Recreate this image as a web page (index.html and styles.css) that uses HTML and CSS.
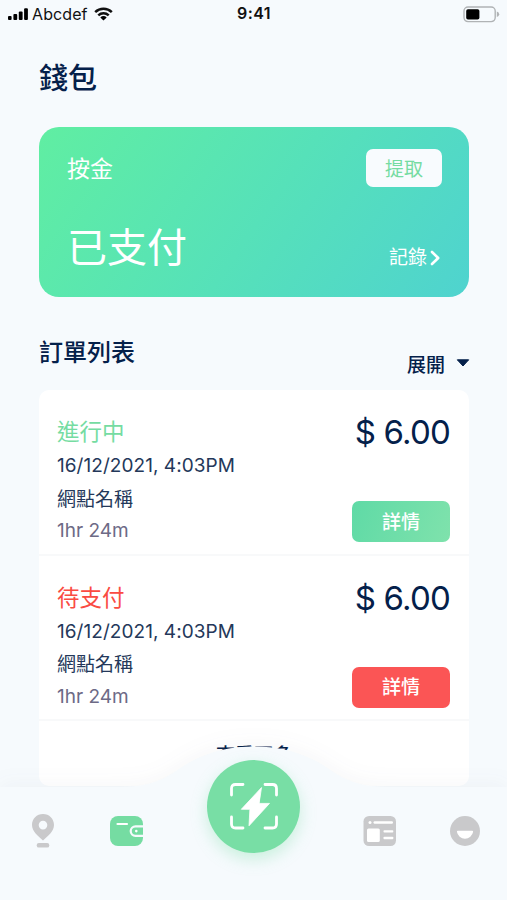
FILE: index.html
```
<!DOCTYPE html>
<html lang="zh-Hant">

<head>
    <meta charset="UTF-8">
    <title>錢包</title>
    <link rel="stylesheet" href="styles.css">
</head>

<body>
    <div class="screen">
        <div class="status">
            <div class="carrier">
                <svg width="21" height="14" viewBox="0 0 21 14">
                    <rect x="0" y="9" width="3.6" height="4" rx="1"/>
                    <rect x="5.4" y="7" width="3.8" height="6" rx="1"/>
                    <rect x="10.8" y="4.5" width="3.8" height="8.5" rx="1"/>
                    <rect x="16.1" y="1.2" width="3.8" height="11.8" rx="1"/>
                </svg>
                <span>Abcdef</span>
                <svg class="wifi" width="19" height="14" viewBox="0 0 19 14">
                    <path d="M1.2 5.1a12 12 0 0 1 16.6 0M4.3 8.3a7.6 7.6 0 0 1 10.4 0" fill="none" stroke="#111" stroke-width="2.5"/>
                    <path d="M6.3 10.4a4.7 4.7 0 0 1 6.4 0l-3.2 3.2z"/>
                </svg>
            </div>
            <div class="time">9:41</div>
            <svg class="battery" width="37" height="17" viewBox="0 0 37 17">
                <rect x="1" y="1" width="31.2" height="14.6" rx="4" fill="none" stroke="#b0b3b5" stroke-width="1.4"/>
                <rect x="3.2" y="3.2" width="13.2" height="10.3" rx="1.8"/>
                <path d="M33.8 5.6q2.4 .6 2.4 2.7t-2.4 2.7z" fill="#b0b3b5"/>
            </svg>
        </div>

        <h1 class="title">錢包</h1>

        <div class="card">
            <div class="row">
                <span class="deposit">按金</span>
                <button class="withdraw">提取</button>
            </div>
            <div class="row bottom">
                <span class="paid">已支付</span>
                <span class="record">記錄
                    <svg width="11" height="16" viewBox="0 0 11 16"><path d="M2 2l6.200 6L2 14" fill="none" stroke="#fff" stroke-width="2.600" stroke-linecap="round" stroke-linejoin="round"/></svg>
                </span>
            </div>
        </div>

        <div class="listHead">
            <h2>訂單列表</h2>
            <span class="expand">展開
                <svg width="14" height="8" viewBox="0 0 14 8"><path d="M1.3 .8h11.400L7 7z" fill="#04204a" stroke="#04204a" stroke-linejoin="round"/></svg>
            </span>
        </div>

        <div class="orders">
            <div class="order">
                <div class="info">
                    <div class="state green">進行中</div>
                    <div class="line date">16/12/2021, 4:03PM</div>
                    <div class="line">網點名稱</div>
                    <div class="line duration">1hr 24m</div>
                </div>
                <div class="side">
                    <div class="price">$ 6.00</div>
                    <button class="detail">詳情</button>
                </div>
            </div>
            <div class="order">
                <div class="info">
                    <div class="state red">待支付</div>
                    <div class="line date">16/12/2021, 4:03PM</div>
                    <div class="line">網點名稱</div>
                    <div class="line duration">1hr 24m</div>
                </div>
                <div class="side">
                    <div class="price">$ 6.00</div>
                    <button class="detail unpaid">詳情</button>
                </div>
            </div>
            <div class="more">查看更多</div>
        </div>

        <!-- tab bar over the list, raised in the middle -->
        <div class="tabbar">
            <svg class="shape" width="507" height="160" viewBox="0 0 507 160">
                <path d="M0 47H120C163 47 172 31 194 20C213 10.500 232 6.500 254 6.500S295 10.500 314 20C336 31 345 47 388 47H507V160H0Z" fill="#f6fafd"/>
            </svg>
            <div class="tabs">
                <svg class="tab pin" width="24" height="36" viewBox="0 0 24 36">
                    <path d="M12 1C5.700 1 1 5.800 1 12c0 6.500 6 10.800 11 15.600C17 22.800 23 18.500 23 12 23 5.800 18.300 1 12 1zm0 6.800a4.300 4.300 0 1 1 0 8.600 4.300 4.300 0 0 1 0-8.600z" fill="#c9c9cb" fill-rule="evenodd"/>
                    <rect x="5.700" y="30" width="12.600" height="4.600" rx="2.200" fill="#c9c9cb"/>
                </svg>
                <svg class="tab" width="34" height="32" viewBox="0 0 34 32">
                    <rect x="0" y="1" width="33" height="30" rx="8" fill="#75dca2"/>
                    <path d="M7.500 9h9.500" stroke="#fff" stroke-width="2.200" stroke-linecap="round"/>
                    <path d="M34 11.300h-8.500a4.800 4.800 0 0 0 0 9.600H34" fill="none" stroke="#f6fafd" stroke-width="2.200"/>
                    <circle cx="26.300" cy="16.100" r="1.300" fill="#fff"/>
                </svg>
                <div class="scan">
                    <svg width="50" height="50" viewBox="0 0 50 50" fill="none" stroke="#fff" stroke-width="2.800" stroke-linecap="round" stroke-linejoin="round">
                        <path d="M2.500 13V6.500q0-4 4-4H14M36 2.500h7.500q4 0 4 4V13M47.500 35v7q0 4-4 4H36M14 46H6.500q-4 0-4-4v-7"/>
                        <path d="M32.300 5.800L12.300 27.300h8.600L20 43.800 40.500 21.400H30.400z" fill="#fff" stroke-width=".8"/>
                    </svg>
                </div>
                <svg class="tab news" width="34" height="32" viewBox="0 0 34 32">
                    <rect x=".5" y="1" width="32.500" height="30" rx="5.500" fill="#c9c9cb"/>
                    <g fill="#fff">
                        <circle cx="7" cy="7.500" r="1.500"/>
                        <rect x="10.500" y="6.300" width="19.500" height="2.500" rx="1.200"/>
                        <rect x="4" y="13.500" width="12.800" height="13.500" rx="1.500"/>
                        <rect x="20.500" y="15.300" width="9.800" height="2.300" rx=".8"/>
                        <rect x="20.500" y="21.700" width="9.800" height="2.600" rx=".8"/>
                    </g>
                </svg>
                <svg class="tab" width="30" height="32" viewBox="0 0 30 32">
                    <circle cx="15" cy="16" r="15" fill="#c9c9cb"/>
                    <path d="M7.800 15.800h14.400q1 0 .9 1a8.200 8.200 0 0 1-16.200 0q-.1-1 .9-1z" fill="#fff"/>
                </svg>
            </div>
        </div>
    </div>
</body>

</html>
```
FILE: styles.css
```
* {
    box-sizing: border-box;
}

body {
    margin: 0;
    font-family: Inter, "Noto Sans CJK TC", sans-serif;
    color: #04204a;
}

svg {
    display: block;
    flex: none;
}

button {
    border: none;
    padding: 2px 0 0;
    font-family: inherit;
    font-size: 19px;
    line-height: 28px;
}

.screen {
    position: relative;
    width: 507px;
    height: 900px;
    overflow: hidden;
    background: #f6fafd;
}

.status {
    display: grid;
    grid-template-columns: 1fr auto 1fr;
    align-items: center;
    height: 28px;
    padding: 0 7px 0 8px;
    color: #111;
}

.carrier {
    display: flex;
    align-items: center;
    gap: 3px;
    font-size: 16px;
    letter-spacing: 0.1px;
}

.wifi {
    margin-left: 3px;
}

.time {
    font-size: 16px;
    font-weight: 600;
    letter-spacing: 0.4px;
    line-height: 26px;
    padding-bottom: 2px;
}

.battery {
    justify-self: end;
}

.title {
    margin: 30px 0 0 39px;
    font-size: 29px;
    font-weight: 500;
    line-height: 42px;
}

.card {
    display: flex;
    flex-direction: column;
    justify-content: space-between;
    width: 430px;
    height: 170px;
    margin: 27px 0 0 39px;
    padding: 22px 26px 20px 28px;
    border-radius: 20px;
    background: linear-gradient(125deg, #60eea2 0%, #56e1b9 52%, #4fd3cf 100%);
    color: #fff;
}

.row {
    display: flex;
    justify-content: space-between;
}

.deposit {
    font-size: 23px;
    line-height: 41px;
}

.withdraw {
    width: 76px;
    height: 38px;
    margin-right: 1px;
    padding-top: 3px;
    border-radius: 7px;
    background: #f8fbfe;
    color: #75dca2;
}

.bottom {
    align-items: flex-end;
}

.paid {
    font-size: 40px;
    line-height: 58px;
}

.record {
    display: flex;
    align-items: center;
    gap: 3px;
    padding-right: 2px;
    font-size: 19px;
    line-height: 38px;
}

.listHead {
    display: flex;
    justify-content: space-between;
    width: 431px;
    height: 93px;
    margin-left: 39px;
    padding-top: 38px;
}

.listHead h2 {
    margin: 0;
    font-size: 24px;
    font-weight: 500;
    line-height: 36px;
}

.expand {
    display: flex;
    align-items: center;
    gap: 11px;
    height: 28px;
    margin-top: 14px;
    font-size: 19px;
    font-weight: 500;
}

.orders {
    width: 430px;
    height: 396px;
    margin-left: 39px;
    border-radius: 10px;
    background: #fff;
}

.order {
    display: flex;
    justify-content: space-between;
    height: 165.5px;
    padding: 25px 19px 0 18px;
    border-bottom: 2px solid #f8f9fa;
}

.state {
    height: 35px;
    font-size: 22.5px;
    line-height: 34px;
}

.green {
    color: #75dca2;
}

.red {
    color: #fa4b42;
}

.line {
    height: 32.5px;
    font-size: 19px;
    line-height: 33px;
    color: #24385a;
}

.duration {
    color: #6d6a86;
    line-height: 32px;
}

.date {
    letter-spacing: 0.05px;
    line-height: 32px;
}

.side {
    display: flex;
    flex-direction: column;
    align-items: flex-end;
}

.price {
    height: 86px;
    font-size: 33px;
    line-height: 34px;
    letter-spacing: -0.8px;
}

.detail {
    width: 98px;
    height: 41px;
    border-radius: 7px;
    background: linear-gradient(110deg, #5fdaa6, #7fe2ac);
    color: #fff;
    font-weight: 500;
}

.unpaid {
    background: #fb5555;
}

.more {
    padding-top: 21px;
    font-size: 19px;
    font-weight: 500;
    line-height: 28px;
    text-align: center;
}

.tabbar {
    position: absolute;
    left: 0;
    bottom: 0;
    width: 507px;
    height: 160px;
}

.shape {
    position: absolute;
    left: 0;
    top: 0;
    overflow: visible;
    filter: drop-shadow(0 -3px 10px rgba(60, 75, 85, 0.045));
}

.tabs {
    position: relative;
    display: flex;
    padding: 20px 27px 0 31px;
}

.tab {
    margin: 55px 0 0 53px;
}

.pin {
    margin: 53px 2px 0 0;
}

.scan {
    display: flex;
    align-items: center;
    justify-content: center;
    width: 93px;
    height: 93px;
    margin-left: 63px;
    border-radius: 50%;
    background: #78dea5;
    box-shadow: 0 6px 16px rgba(117, 220, 162, 0.35);
}

.news {
    margin-left: 63px;
}
```
